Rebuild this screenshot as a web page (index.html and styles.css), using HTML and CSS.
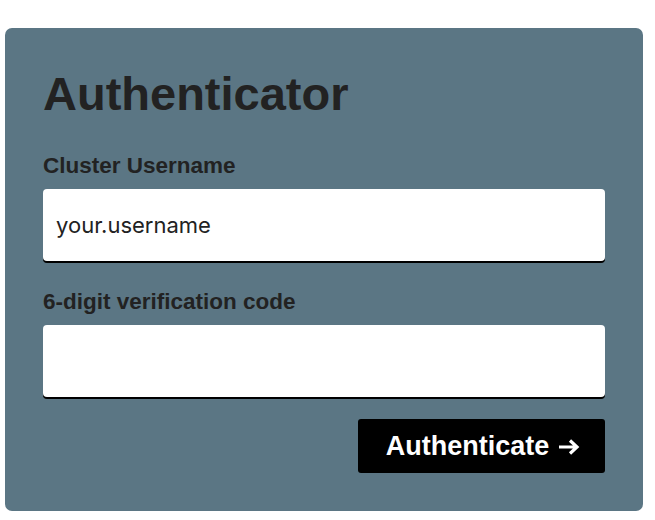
FILE: index.html
```html
<!DOCTYPE html>
<html lang="en">
<head>
<meta charset="utf-8">
<title>Authenticator</title>
<link rel="stylesheet" href="styles.css">
</head>
<body>
<main class="page">
  <form class="card">
    <h1 class="title">Authenticator</h1>
    <label class="label" for="user">Cluster Username</label>
    <div class="field" id="user"><span class="value">your.username</span></div>
    <label class="label" for="code">6-digit verification code</label>
    <div class="field" id="code"></div>
    <div class="actions">
      <button type="button" class="btn">Authenticate
        <svg class="arrow" width="22" height="16" viewBox="0 0 22 16" aria-hidden="true"><path d="M1 8H19M12 1.5L19 8L12 14.5" fill="none" stroke="#fff" stroke-width="3.2" stroke-linecap="butt" stroke-linejoin="miter"/></svg>
      </button>
    </div>
  </form>
</main>
</body>
</html>
```
FILE: styles.css
```css
html, body {
  margin: 0;
  padding: 0;
  background: #fff;
}
.page {
  padding: 28px 12px 0 5px;
}
.card {
  width: 638px;
  height: 483px;
  box-sizing: border-box;
  background: #5b7684;
  border-radius: 7px;
  padding: 38px 38px 0 38px;
  display: flex;
  flex-direction: column;
  font-family: "Liberation Sans", Arial, sans-serif;
  color: #222;
}
.title {
  margin: 0 0 30px;
  font-size: 47px;
  line-height: 56px;
  font-weight: 700;
}
.label {
  display: block;
  margin: 0 0 10px;
  font-size: 22.5px;
  line-height: 27px;
  font-weight: 700;
}
.field {
  height: 72px;
  margin-bottom: 27px;
  box-sizing: border-box;
  background: #fff;
  border-radius: 4px;
  box-shadow: 0 2px 0 #000;
  display: flex;
  align-items: center;
  padding: 0 13px;
}
.field + .actions {
  margin-top: -5px;
}
.value {
  font-family: Inter, "Liberation Sans", sans-serif;
  font-size: 22px;
  color: #222;
}
.actions {
  display: flex;
  justify-content: flex-end;
}
.btn {
  width: 247px;
  height: 54px;
  background: #000;
  color: #fff;
  border: 0;
  border-radius: 3px;
  font-family: "Liberation Sans", Arial, sans-serif;
  font-size: 27px;
  font-weight: 700;
  padding: 0 0 0 3px;
  display: flex;
  align-items: center;
  justify-content: center;
  gap: 9px;
}
.arrow {
  display: block;
  margin-top: 1px;
}
```
